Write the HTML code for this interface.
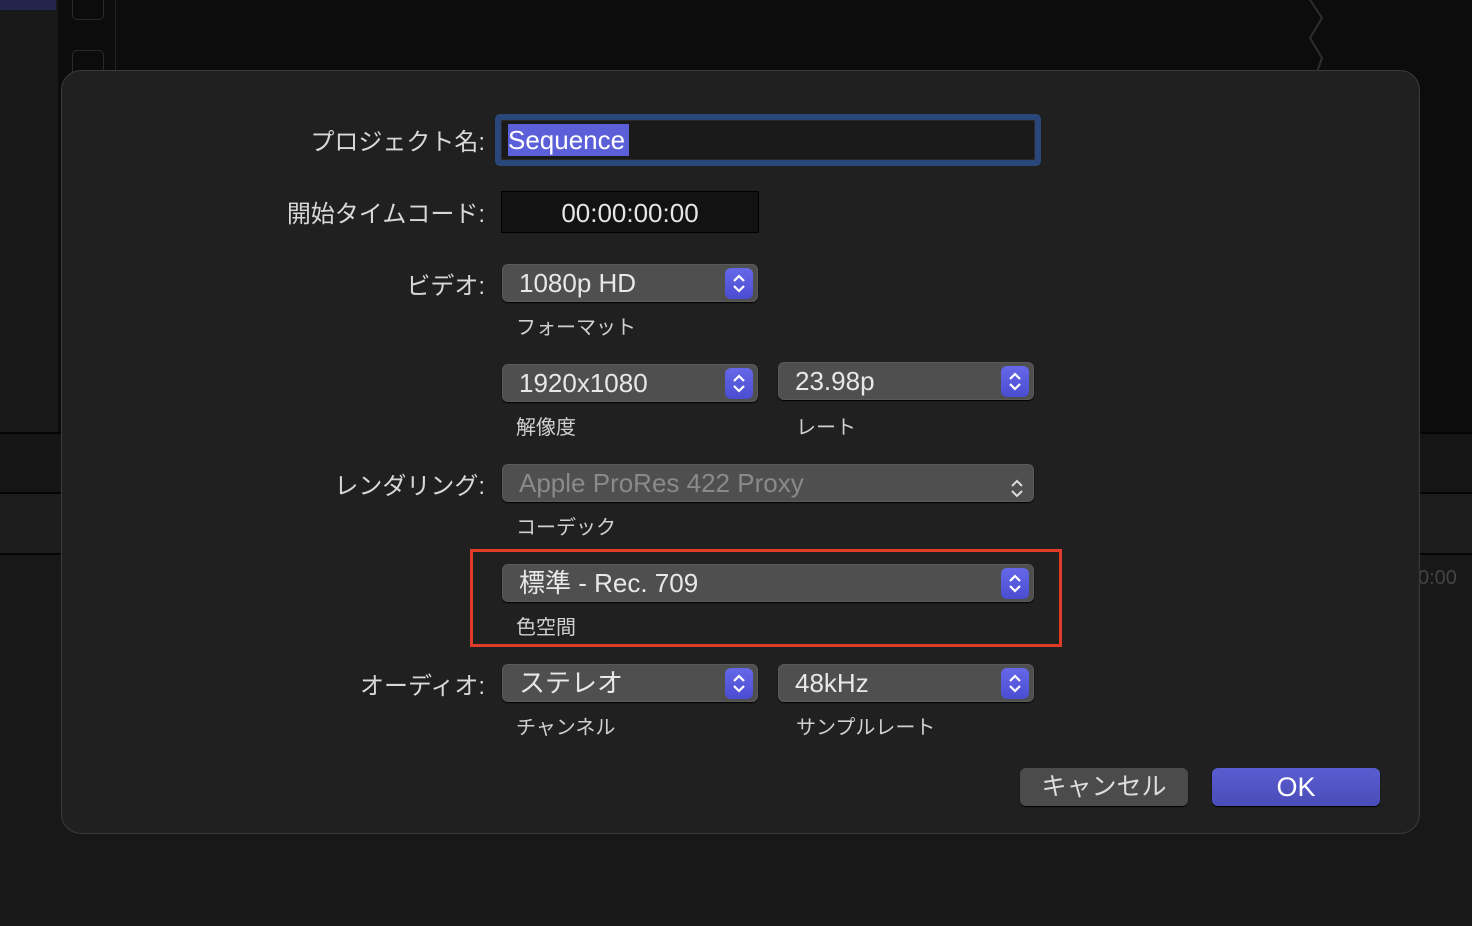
<!DOCTYPE html><html><head><meta charset="utf-8"><style>
body{margin:0;width:1472px;height:926px;background:#161616;position:relative;overflow:hidden;font-family:"Liberation Sans","Noto Sans CJK JP",sans-serif;color:#ddd}
div{position:absolute;box-sizing:border-box}
.lab{right:987px;font-size:24px;color:#d8d8d8;white-space:nowrap;text-align:right}
.sub{font-size:20px;color:#d0d0d0;white-space:nowrap}
.pop{height:38px;background:#4f4f4f;border-radius:6px;border:1px solid #5a5a5a;box-shadow:0 1px 1px #000;font-size:26px;color:#e8e8e8;padding-left:16px;line-height:36px;white-space:nowrap}
.st{width:28px;height:31px;top:3px;right:4px;background:linear-gradient(#6568e8,#4a4dd0);border-radius:6px}
.st svg{position:absolute;left:6px;top:5px}
</style></head><body>
<div style="left:0;top:0;width:1472px;height:432px;background:#0c0c0c"></div>
<div style="left:0;top:0;width:58px;height:432px;background:#181818"></div>
<div style="left:0;top:0;width:56px;height:10px;background:#23264a"></div>
<div style="left:72px;top:-10px;width:32px;height:30px;border:1px solid #2a2a2a;border-radius:5px"></div>
<div style="left:72px;top:50px;width:32px;height:30px;border:1px solid #2a2a2a;border-radius:5px"></div>
<div style="left:115px;top:0;width:1px;height:80px;background:#222"></div>
<svg style="position:absolute;left:1300px;top:0" width="40" height="75"><path d="M10 0 L22 18 L10 38 L22 58 L16 75" fill="none" stroke="#2e2e2e" stroke-width="2"/></svg>
<div style="left:0;top:432px;width:1472px;height:2px;background:#050505"></div>
<div style="left:0;top:434px;width:1472px;height:58px;background:#151515"></div>
<div style="left:0;top:492px;width:1472px;height:2px;background:#050505"></div>
<div style="left:0;top:494px;width:1472px;height:59px;background:#1d1d1d"></div>
<div style="left:0;top:553px;width:1472px;height:2px;background:#050505"></div>
<div style="left:0;top:555px;width:1472px;height:371px;background:#181818"></div>
<div style="left:1418px;top:567px;font-size:20px;color:#444">0:00</div>
<div style="left:61px;top:70px;width:1359px;height:764px;background:#202020;border:1px solid #3a3a3a;border-radius:20px"></div>

<div class="lab" style="top:122px">プロジェクト名:</div>
<div style="left:495px;top:114px;width:546px;height:52px;border-radius:5px;background:#29477a"></div>
<div style="left:501px;top:120px;width:534px;height:40px;background:#1a1a1a;border:1px solid #2a2a2a"></div>
<div style="left:508px;top:124px;width:121px;height:32px;background:#5b5fd8;color:#fff;font-size:26px;line-height:32px">Sequence</div>

<div class="lab" style="top:194px">開始タイムコード:</div>
<div style="left:501px;top:191px;width:258px;height:42px;background:#121212;border:1px solid #000;font-size:26px;text-align:center;line-height:42px;color:#e6e6e6">00:00:00:00</div>

<div class="lab" style="top:266px">ビデオ:</div>
<div class="pop" style="left:502px;top:264px;width:256px">1080p HD<div class="st"><svg width="16" height="21" viewBox="0 0 16 21"><path d="M3 8l5-5 5 5M3 13l5 5 5-5" fill="none" stroke="#fff" stroke-width="2.2"/></svg></div></div>
<div class="sub" style="left:516px;top:311px">フォーマット</div>

<div class="pop" style="left:502px;top:364px;width:256px">1920x1080<div class="st"><svg width="16" height="21" viewBox="0 0 16 21"><path d="M3 8l5-5 5 5M3 13l5 5 5-5" fill="none" stroke="#fff" stroke-width="2.2"/></svg></div></div>
<div class="pop" style="left:778px;top:362px;width:256px">23.98p<div class="st"><svg width="16" height="21" viewBox="0 0 16 21"><path d="M3 8l5-5 5 5M3 13l5 5 5-5" fill="none" stroke="#fff" stroke-width="2.2"/></svg></div></div>
<div class="sub" style="left:516px;top:411px">解像度</div>
<div class="sub" style="left:796px;top:411px">レート</div>

<div class="lab" style="top:466px">レンダリング:</div>
<div class="pop" style="left:502px;top:464px;width:532px;color:#8a8a8a">Apple ProRes 422 Proxy<div style="right:8px;top:7px;width:16px;height:21px"><svg width="16" height="21" viewBox="0 0 16 21"><path d="M3 8l5-5 5 5M3 13l5 5 5-5" fill="none" stroke="#ddd" stroke-width="2"/></svg></div></div>
<div class="sub" style="left:516px;top:511px">コーデック</div>

<div style="left:470px;top:549px;width:592px;height:98px;border:3px solid #e03a28"></div>
<div class="pop" style="left:502px;top:564px;width:532px">標準 - Rec. 709<div class="st"><svg width="16" height="21" viewBox="0 0 16 21"><path d="M3 8l5-5 5 5M3 13l5 5 5-5" fill="none" stroke="#fff" stroke-width="2.2"/></svg></div></div>
<div class="sub" style="left:516px;top:611px">色空間</div>

<div class="lab" style="top:666px">オーディオ:</div>
<div class="pop" style="left:502px;top:664px;width:256px">ステレオ<div class="st"><svg width="16" height="21" viewBox="0 0 16 21"><path d="M3 8l5-5 5 5M3 13l5 5 5-5" fill="none" stroke="#fff" stroke-width="2.2"/></svg></div></div>
<div class="pop" style="left:778px;top:664px;width:256px">48kHz<div class="st"><svg width="16" height="21" viewBox="0 0 16 21"><path d="M3 8l5-5 5 5M3 13l5 5 5-5" fill="none" stroke="#fff" stroke-width="2.2"/></svg></div></div>
<div class="sub" style="left:516px;top:711px">チャンネル</div>
<div class="sub" style="left:796px;top:711px">サンプルレート</div>

<div style="left:1020px;top:768px;width:168px;height:38px;background:#4b4b4b;border-radius:6px;box-shadow:0 1px 1px #000;font-size:25px;text-align:center;line-height:38px;color:#ddd">キャンセル</div>
<div style="left:1212px;top:768px;width:168px;height:38px;background:linear-gradient(#5a5dd0,#4a4cb8);border-radius:6px;box-shadow:0 1px 1px #000;font-size:27px;text-align:center;line-height:38px;color:#fff">OK</div>
</body></html>
